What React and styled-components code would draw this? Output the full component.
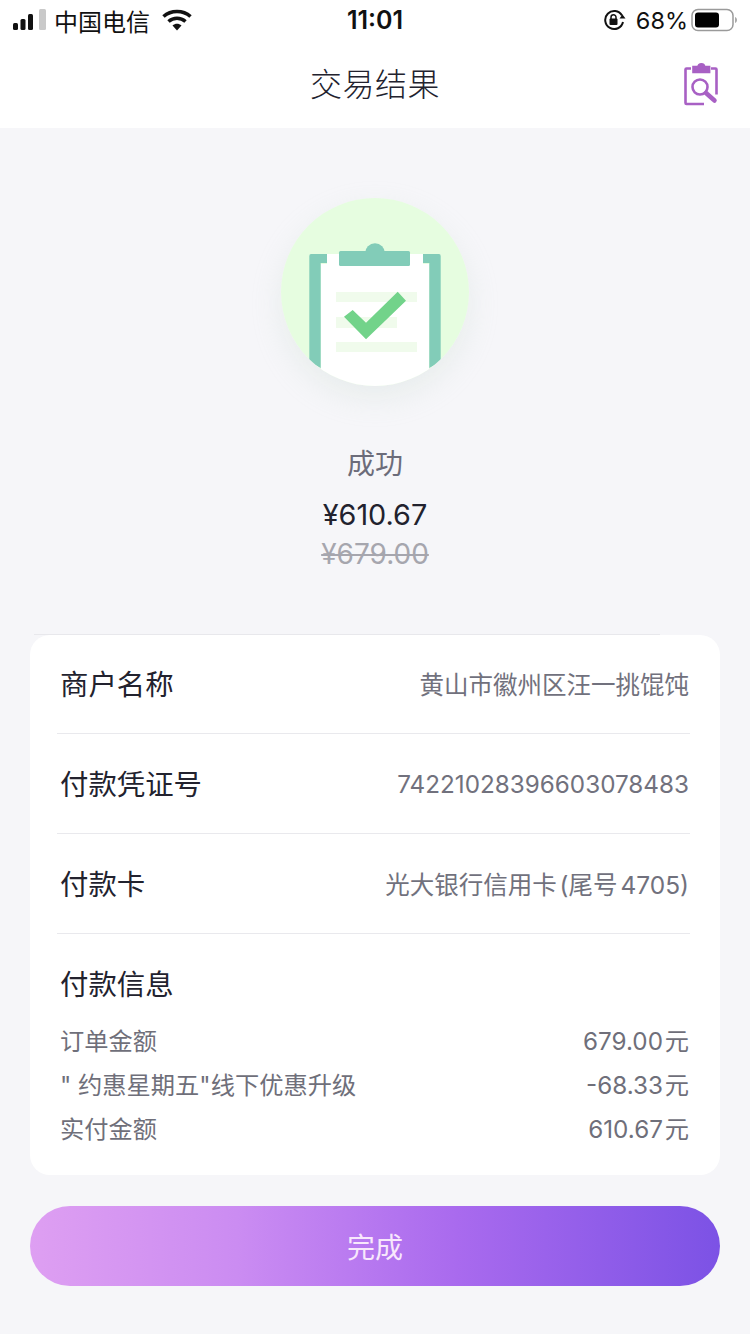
import React from 'react';
import styled, { createGlobalStyle } from 'styled-components';

const GlobalStyle = createGlobalStyle`
  html, body {
    margin: 0;
    padding: 0;
    background: #f6f6f9;
  }
  * {
    box-sizing: border-box;
  }
`;

const Page = styled.div`
  width: 750px;
  height: 1334px;
  overflow: hidden;
  background: #f6f6f9;
  font-family: Inter, "Noto Sans CJK SC", sans-serif;
  color: #22222e;
`;

const Header = styled.header`
  height: 128px;
  background: #fff;
`;

const StatusBar = styled.div`
  height: 40px;
  padding: 0 13px;
  display: grid;
  grid-template-columns: 1fr auto 1fr;
  align-items: center;
  color: #111;
`;

const StatusLeft = styled.div`
  display: flex;
  align-items: center;
`;

const StatusRight = styled.div`
  display: flex;
  align-items: center;
  justify-content: flex-end;
`;

const Carrier = styled.span`
  margin: 0 12px 0 7px;
  font-size: 24px;
`;

const Clock = styled.span`
  font-size: 25px;
  font-weight: 600;
`;

const BatteryText = styled.span`
  margin: 0 3px 0 10px;
  font-size: 23.5px;
`;

const NavBar = styled.nav`
  height: 88px;
  padding: 0 32px;
  display: grid;
  grid-template-columns: 1fr auto 1fr;
  align-items: center;
`;

const NavTitle = styled.h1`
  grid-column: 2;
  margin: 2px 0 0;
  font-size: 32px;
  font-weight: 300;
  letter-spacing: 0.5px;
  line-height: 86px;
`;

const NavAction = styled.div`
  justify-self: end;
  display: flex;
`;

const Result = styled.section`
  padding-top: 70px;
  height: 507px;
  display: flex;
  flex-direction: column;
  align-items: center;
`;

const Badge = styled.div`
  width: 188px;
  height: 188px;
  border-radius: 50%;
  overflow: hidden;
  display: flex;
  box-shadow: 0 12px 30px rgba(190, 210, 195, 0.24);
`;

const ResultStatus = styled.div`
  margin-top: 58px;
  font-size: 28px;
  line-height: 40px;
  color: #6c6c7a;
`;

const ResultAmount = styled.div`
  margin-top: 11px;
  font-size: 28.8px;
  line-height: 40px;
  color: #22222e;
`;

const ResultOriginal = styled.div`
  margin-top: -1px;
  font-size: 28px;
  line-height: 40px;
  color: #a6a6ae;
  text-decoration: line-through;
`;

const Card = styled.section`
  position: relative;
  margin: 0 30px;
  height: 540px;
  padding: 0 31px 0 27px;
  background: #fff;
  border-radius: 20px;

  &::before {
    content: "";
    position: absolute;
    top: -1px;
    left: 4px;
    width: 626px;
    height: 1px;
    background: #e8e8ec;
  }
`;

const InfoRow = styled.div`
  height: 100px;
  margin-right: -1px;
  padding: 2px 1px 0 3px;
  display: flex;
  align-items: center;
  justify-content: space-between;
  border-bottom: 1px solid #e9e9ed;

  &:first-child {
    height: 99px;
    padding-bottom: 1px;
  }
`;

const InfoLabel = styled.span`
  font-size: 28.4px;
  line-height: 40px;
  color: #22222e;
`;

const InfoValue = styled.span`
  font-size: ${(p) => p.$size || '24.5px'};
  line-height: 36px;
  word-spacing: ${(p) => p.$wordSpacing || 0};
  color: #71717d;
`;

const PayBlock = styled.div`
  padding-left: 3px;
`;

const PayTitle = styled.div`
  height: 83px;
  padding-top: 13px;
  display: flex;
  align-items: center;
  font-size: 28.4px;
  color: #22222e;
`;

const PayRow = styled.div`
  height: 44px;
  display: flex;
  align-items: center;
  justify-content: space-between;
  font-size: 24.25px;
  word-spacing: -5px;
  color: #6f6f7a;
`;

const PayLabel = styled.span`
  word-spacing: 0;
`;

const DoneButton = styled.button`
  display: block;
  width: 690px;
  height: 80px;
  margin: 31px 30px 0;
  padding: 0;
  border: 0;
  border-radius: 40px;
  background: linear-gradient(90deg, #de9ff2 0%, #cb8cf2 30%, #a96aee 62%, #7c52e5 100%);
  font-family: inherit;
  font-size: 28px;
  color: #f8e8fc;
`;

const SignalIcon = () => (
  <svg width="34" height="22" viewBox="0 0 34 22">
    <rect x="0" y="14" width="5" height="7" rx="1.5" fill="#111" />
    <rect x="7.5" y="10" width="5" height="11" rx="1.5" fill="#111" />
    <rect x="15" y="5" width="5" height="16" rx="1.5" fill="#111" />
    <rect x="26" y="0" width="7" height="21" rx="1.5" fill="#c9c9c9" />
  </svg>
);

const WifiIcon = () => (
  <svg width="30" height="22" viewBox="0 0 30 22" fill="none">
    <path d="M1.5 7.5C9 .8 21 .8 28.5 7.5" stroke="#111" strokeWidth="3.6" />
    <path d="M6.5 12.5c5-4.3 12-4.3 17 0" stroke="#111" strokeWidth="3.6" />
    <path d="M10.5 16.5c2.8-2.2 6.2-2.2 9 0L15 21.5z" fill="#111" />
  </svg>
);

const RotationLockIcon = () => (
  <svg width="23" height="22" viewBox="0 0 23 22" fill="none">
    <path d="M19 6.5A9 9 0 1 0 20 13" stroke="#111" strokeWidth="2" />
    <path d="M22.5 9.5h-6l3-4z" fill="#111" />
    <rect x="6.5" y="9.5" width="8" height="6.5" rx="1" fill="#111" />
    <path d="M8 10V8.3a2.5 2.5 0 0 1 5 0V10" stroke="#111" strokeWidth="1.5" />
  </svg>
);

const BatteryIcon = () => (
  <svg width="46" height="24" viewBox="0 0 46 24" fill="none">
    <rect x="1" y="1.5" width="41" height="21" rx="6" stroke="#9a9a9a" strokeWidth="1.5" />
    <rect x="4" y="4.5" width="24" height="15" rx="3" fill="#000" />
    <path d="M44 9v6c1.4-.5 2-1.6 2-3s-.6-2.5-2-3z" fill="#aaa" />
  </svg>
);

const RecordSearchIcon = () => (
  <svg width="34" height="44" viewBox="0 0 34 44" fill="none" stroke="#a860c4" strokeWidth="2.6">
    <path d="M7 6.500H2.500a1 1 0 0 0-1 1v33.500a1 1 0 0 0 1 1H20" />
    <path d="M27 6.500h4.500a1 1 0 0 1 1 1v25" />
    <path d="M9.500 5h5a2.800 2.800 0 0 1 5.600 0h5v5H9.500z" fill="#a860c4" />
    <circle cx="16" cy="25" r="7.500" />
    <path d="M22 31l8.500 7.500" strokeWidth="4.500" strokeLinecap="round" />
  </svg>
);

const ClipboardBadge = () => (
  <svg width="188" height="188" viewBox="0 0 188 188">
    <rect width="188" height="188" fill="#e6fde0" />
    <path d="M46 56h96v10h6v122H40V66h6z" fill="#fff" />
    <path d="M30 56h16v9h-6.300v105l-11.400-6.500V58a2 2 0 0 1 1.700-2z" fill="#82ccb8" />
    <path d="M158 56h-16v9h6.300v105l11.400-6.500V58a2 2 0 0 0-1.700-2z" fill="#82ccb8" />
    <circle cx="94" cy="55.300" r="10" fill="#82ccb8" />
    <rect x="58" y="53" width="71" height="15" rx="1.500" fill="#82ccb8" />
    <rect x="55" y="94" width="81" height="10" fill="#f0fbec" />
    <rect x="55" y="119" width="61" height="11" fill="#f0fbec" />
    <rect x="55" y="144" width="81" height="10" fill="#f0fbec" />
    <path d="M116.700 93.700L125 102.700 85 141.300 63 118.700 71.700 112 85 124.700z" fill="#72d38a" />
  </svg>
);

const PAY_ROWS = [
  ['订单金额', '679.00 元'],
  ['" 约惠星期五"线下优惠升级', '-68.33 元'],
  ['实付金额', '610.67 元'],
];

export default function App() {
  return (
    <Page>
      <GlobalStyle />
      <Header>
        <StatusBar>
          <StatusLeft>
            <SignalIcon />
            <Carrier>中国电信</Carrier>
            <WifiIcon />
          </StatusLeft>
          <Clock>11:01</Clock>
          <StatusRight>
            <RotationLockIcon />
            <BatteryText>68%</BatteryText>
            <BatteryIcon />
          </StatusRight>
        </StatusBar>
        <NavBar>
          <NavTitle>交易结果</NavTitle>
          <NavAction>
            <RecordSearchIcon />
          </NavAction>
        </NavBar>
      </Header>

      <Result>
        <Badge>
          <ClipboardBadge />
        </Badge>
        <ResultStatus>成功</ResultStatus>
        <ResultAmount>¥610.67</ResultAmount>
        <ResultOriginal>¥679.00</ResultOriginal>
      </Result>

      <Card>
        <InfoRow>
          <InfoLabel>商户名称</InfoLabel>
          <InfoValue>黄山市徽州区汪一挑馄饨</InfoValue>
        </InfoRow>
        <InfoRow>
          <InfoLabel>付款凭证号</InfoLabel>
          <InfoValue $size="24.25px">74221028396603078483</InfoValue>
        </InfoRow>
        <InfoRow>
          <InfoLabel>付款卡</InfoLabel>
          <InfoValue $wordSpacing="-4px">光大银行信用卡 (尾号 4705)</InfoValue>
        </InfoRow>
        <PayBlock>
          <PayTitle>付款信息</PayTitle>
          {PAY_ROWS.map(([label, value]) => (
            <PayRow key={label}>
              <PayLabel>{label}</PayLabel>
              <span>{value}</span>
            </PayRow>
          ))}
        </PayBlock>
      </Card>

      <DoneButton>完成</DoneButton>
    </Page>
  );
}
